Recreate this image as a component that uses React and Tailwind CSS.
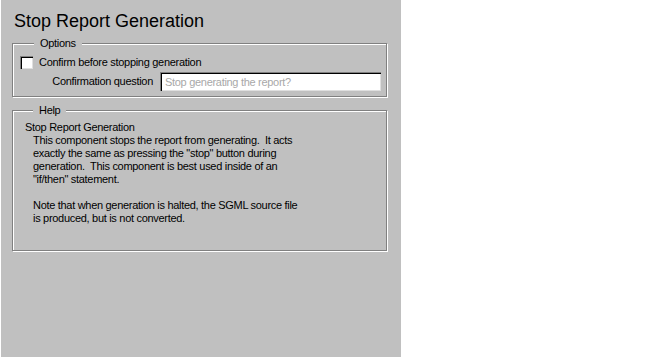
export default function App() {
  const font = { fontFamily: '"Liberation Sans", Arial, sans-serif' };
  return (
    <div className="w-[651px] h-[357px] bg-white" style={font}>
      <div className="ml-[1px] w-[400px] h-[357px] bg-[#c0c0c0] pt-[11px] text-black">
        <h1 className="ml-[13px] text-[18px] leading-[21px] font-normal">Stop Report Generation</h1>

        <div className="relative ml-[11px] mt-[11px] w-[375px] border border-[#808080] shadow-[1px_1px_0_#fff,inset_1px_1px_0_#fff] pt-[12px] pb-[5px] text-[11px] leading-[13px] tracking-[-0.3px]">
          <span className="absolute left-[21px] top-[-7px] px-[6px] bg-[#c0c0c0] leading-[13px]">Options</span>
          <div className="flex items-center ml-[7px]">
            <span className="w-[13px] h-[13px] bg-white border-t border-l border-[#808080] border-b-white border-r-white shadow-[inset_1px_1px_0_#000,inset_-1px_-1px_0_#dfdfdf]" />
            <span className="ml-[6px]">Confirm before stopping generation</span>
          </div>
          <div className="flex items-center mt-[3px]">
            <span className="w-[140px] text-right">Confirmation question</span>
            <div className="ml-[7px] w-[221px] h-[19px] bg-white border-t border-l border-[#808080] border-b-white border-r-white shadow-[inset_1px_1px_0_#000,inset_-1px_-1px_0_#dfdfdf] flex items-center pl-[4px] text-[#a8a8a8]">
              Stop generating the report?
            </div>
          </div>
        </div>

        <div className="relative ml-[11px] mt-[13px] w-[375px] h-[141px] border border-[#808080] shadow-[1px_1px_0_#fff,inset_1px_1px_0_#fff] pt-[10px] pl-[12px] text-[11px] leading-[13px] tracking-[-0.3px]">
          <span className="absolute left-[20px] top-[-7px] px-[6px] bg-[#c0c0c0] leading-[13px]">Help</span>
          <div>Stop Report Generation</div>
          <div className="pl-[8px] whitespace-pre">
            <div>This component stops the report from generating.  It acts</div>
            <div>exactly the same as pressing the "stop" button during</div>
            <div>generation.  This component is best used inside of an</div>
            <div>"if/then" statement.</div>
            <div>&nbsp;</div>
            <div>Note that when generation is halted, the SGML source file</div>
            <div>is produced, but is not converted.</div>
          </div>
        </div>
      </div>
    </div>
  );
}
